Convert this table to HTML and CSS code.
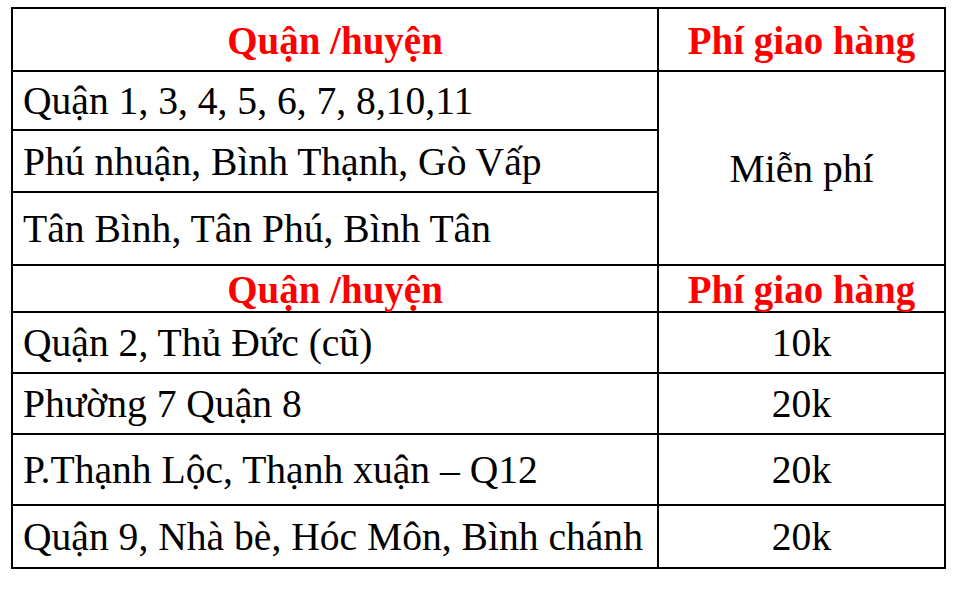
FILE: index.html
```html
<!DOCTYPE html>
<html lang="vi">
<head>
<meta charset="utf-8">
<title>Phí giao hàng</title>
<link rel="stylesheet" href="styles.css">
</head>
<body>
<table class="fee">
  <colgroup><col class="c-area"><col class="c-fee"></colgroup>
  <tr class="r-head1"><th>Quận /huyện</th><th>Phí giao hàng</th></tr>
  <tr class="r1"><td>Quận 1, 3, 4, 5, 6, 7, 8,10,11</td><td class="center" rowspan="3">Miễn phí</td></tr>
  <tr class="r2"><td>Phú nhuận, Bình Thạnh, Gò Vấp</td></tr>
  <tr class="r3"><td>Tân Bình, Tân Phú, Bình Tân</td></tr>
  <tr class="r-head2"><th>Quận /huyện</th><th>Phí giao hàng</th></tr>
  <tr class="r4"><td>Quận 2, Thủ Đức (cũ)</td><td class="center">10k</td></tr>
  <tr class="r5"><td>Phường 7 Quận 8</td><td class="center">20k</td></tr>
  <tr class="r6"><td>P.Thạnh Lộc, Thạnh xuận – Q12</td><td class="center">20k</td></tr>
  <tr class="r7"><td>Quận 9, Nhà bè, Hóc Môn, Bình chánh</td><td class="center">20k</td></tr>
</table>
</body>
</html>
```
FILE: styles.css
```css
html, body {
  margin: 0;
  padding: 0;
  background: #fff;
}
body {
  padding: 7px 0 0 11px;
}
.fee {
  border-collapse: collapse;
  font-family: "Liberation Serif", "Times New Roman", serif;
  font-size: 39px;
  color: #000;
  width: 933px;
  table-layout: fixed;
}
.c-area { width: 646px; }
.c-fee { width: 287px; }
.fee th, .fee td {
  border: 2px solid #000;
  padding: 3px 0 0 10px;
  vertical-align: middle;
  line-height: 1;
  white-space: nowrap;
}
.fee td {
  font-size: 39.6px;
}
.fee th {
  color: #f00;
  font-weight: bold;
  text-align: center;
  padding: 1px 0 0 0;
}
.fee td.center {
  text-align: center;
  padding: 3px 0 0 0;
}
.r-head1 { height: 63px; }
.r1 { height: 59px; }
.r2 { height: 62px; }
.r3 { height: 73px; }
.r-head2 { height: 47px; }
.r4 { height: 61px; }
.r5 { height: 61px; }
.r6 { height: 71px; }
.r7 { height: 63px; }
```
